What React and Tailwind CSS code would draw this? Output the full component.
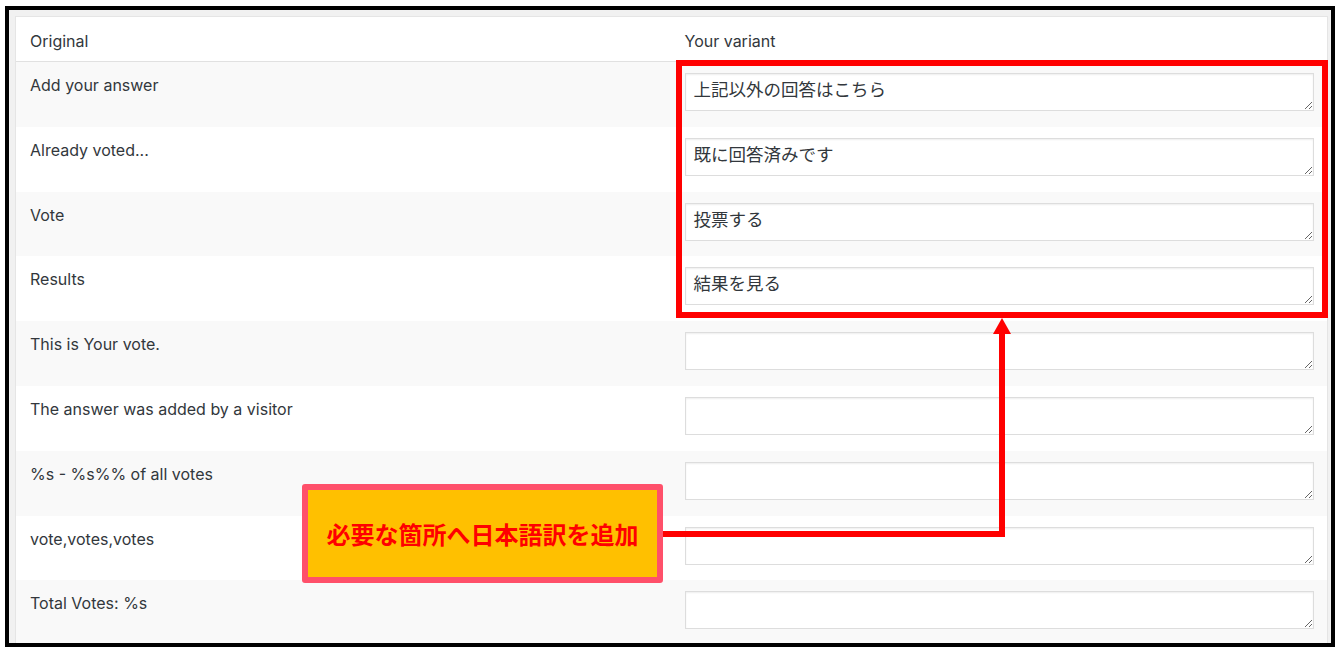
import React from "react";

const rows = [
  { label: "Add your answer", value: "上記以外の回答はこちら" },
  { label: "Already voted...", value: "既に回答済みです" },
  { label: "Vote", value: "投票する" },
  { label: "Results", value: "結果を見る" },
  { label: "This is Your vote.", value: "" },
  { label: "The answer was added by a visitor", value: "" },
  { label: "%s - %s%% of all votes", value: "" },
  { label: "vote,votes,votes", value: "" },
  { label: "Total Votes: %s", value: "" },
];

const sans = { fontFamily: "Inter, 'Noto Sans CJK JP', sans-serif" };

export default function App() {
  return (
    <div className="relative w-[1342px] h-[652px] bg-white overflow-hidden">
      <div className="ml-[5px] mt-[6px] w-[1330px] h-[641px] border-4 border-black bg-[#f1f1f1] overflow-hidden pl-[6px] pt-[6px] pr-[3px]">
        <div
          className="w-[1313px] border border-[#e5e5e5] bg-white text-[#32373c] text-[16px] leading-[20px]"
          style={sans}
        >
          <div className="grid grid-cols-2 h-[45px] border-b border-[#e1e1e1]">
            <div className="pl-[14px] pt-[14px]">Original</div>
            <div className="pl-[13px] pt-[14px]">Your variant</div>
          </div>
          {rows.map((r, i) => (
            <div
              key={i}
              className={
                "grid grid-cols-2 h-[64.8px] " +
                (i % 2 === 0 ? "bg-[#f9f9f9]" : "bg-white")
              }
            >
              <div className="pl-[14px] pt-[13px]">{r.label}</div>
              <div className="pl-[13px] pr-[13px] pt-[11px]">
                <textarea
                  defaultValue={r.value}
                  className="block w-full h-[38px] border border-[#dddddd] bg-white px-[8px] py-[3px] text-[17.5px] leading-[24px] text-[#32373c] shadow-[inset_0_1px_2px_rgba(0,0,0,0.07)] outline-none"
                  style={{ fontFamily: "'Noto Sans CJK JP', sans-serif" }}
                />
              </div>
            </div>
          ))}
        </div>
      </div>

      {/* red highlight box */}
      <div className="absolute left-[676px] top-[60px] w-[652px] h-[258px] border-[6px] border-[#ff0000] pointer-events-none" />

      {/* arrow */}
      <svg
        className="absolute left-0 top-0 pointer-events-none"
        width="1342"
        height="652"
        viewBox="0 0 1342 652"
      >
        <rect x="660" y="531" width="345" height="6" fill="#ff0000" />
        <rect x="999" y="330" width="6" height="207" fill="#ff0000" />
        <polygon points="1002,318 993,334 1011,334" fill="#ff0000" />
      </svg>

      {/* callout */}
      <div
        className="absolute left-[302px] top-[484px] w-[361px] h-[99px] border-[6px] border-[#ff506a] bg-[#ffc000] rounded-[3px] flex items-center justify-center text-[#ff0000] font-bold text-[24px] leading-none"
        style={{ fontFamily: "'Noto Sans CJK JP', sans-serif" }}
      >
        必要な箇所へ日本語訳を追加
      </div>
    </div>
  );
}
